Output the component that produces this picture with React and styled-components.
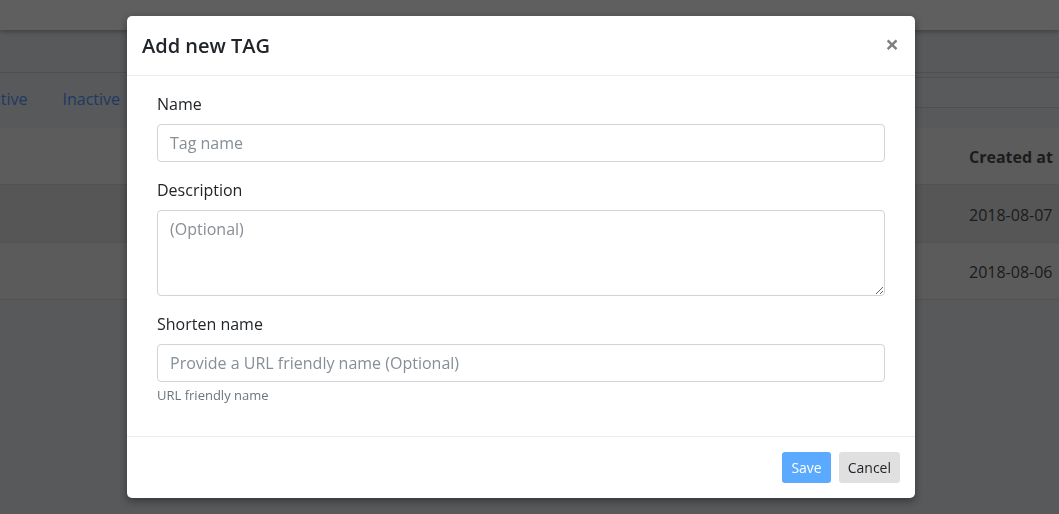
import React from 'react';
import styled, { createGlobalStyle } from 'styled-components';

const GlobalStyle = createGlobalStyle`
  html, body {
    margin: 0;
    padding: 0;
    height: 100%;
    overflow: hidden;
    font-family: "Open Sans", "Noto Sans", sans-serif;
  }
  * {
    box-sizing: border-box;
  }
`;

// 背景页面
const Page = styled.div`
  position: relative;
  isolation: isolate;
  width: 100%;
  height: 100vh;
  background: #b0b2b6;
  overflow: hidden;
`;

const TopBar = styled.div`
  height: 30px;
  background: #bebebe;
  box-shadow: 0 2px 4px rgba(0, 0, 0, 0.25);
  position: relative;
  z-index: 1;
`;

const Toolbar = styled.div`
  height: 43px;
  border-bottom: 1px solid #9c9ea2;
`;

const TabsRow = styled.div`
  height: 55px;
  display: flex;
  align-items: flex-start;
  justify-content: space-between;
`;

const Tabs = styled.div`
  display: flex;
  margin-left: -17px;
  padding-top: 14px;
  gap: 35px;
`;

const Tab = styled.a`
  font-size: 16px;
  line-height: 24px;
  color: #3f72c4;
  text-decoration: none;
`;

const Search = styled.div`
  width: 300px;
  height: 31px;
  margin-top: 4px;
  border-top: 1px solid #9c9ea2;
  border-bottom: 1px solid #9c9ea2;
  background: #b2b4b8;
`;

const Table = styled.div`
  width: 1059px;
`;

const Row = styled.div`
  display: grid;
  grid-template-columns: 957px 102px;
  height: ${(p) => p.$h}px;
  align-items: center;
  background: ${(p) => p.$bg};
  border-bottom: 1px solid #a4a4a4;
`;

const Cell = styled.div`
  grid-column: 2;
  padding-left: 12px;
  padding-top: 2px;
  font-size: 16px;
  color: #383838;
  font-weight: ${(p) => (p.$head ? 700 : 400)};
  white-space: nowrap;
`;

// 弹窗遮罩
const Backdrop = styled.div`
  position: fixed;
  inset: 0;
  background: rgba(0, 0, 0, 0.5);
`;

const Modal = styled.div`
  position: fixed;
  top: 16px;
  left: 127px;
  width: 788px;
  background: #fff;
  border-radius: 5px;
  box-shadow: 0 3px 9px rgba(0, 0, 0, 0.4);
  display: flex;
  flex-direction: column;
`;

const ModalHeader = styled.div`
  height: 60px;
  padding: 0 15px;
  display: flex;
  align-items: center;
  justify-content: space-between;
  border-bottom: 1px solid #e9ecef;
`;

const Title = styled.h5`
  margin: 0;
  font-size: 20px;
  font-weight: 600;
  color: #212529;
  line-height: 28px;
`;

const Close = styled.button`
  border: 0;
  background: transparent;
  padding: 0;
  margin-right: 1px;
  margin-top: -3px;
  font-family: inherit;
  font-size: 24px;
  font-weight: 700;
  line-height: 1;
  color: #000;
  opacity: 0.5;
  cursor: pointer;
`;

const ModalBody = styled.div`
  padding: 16px 30px 15px;
`;

const FormGroup = styled.div`
  margin-bottom: 16px;
`;

const Label = styled.label`
  display: block;
  margin-bottom: 8px;
  font-size: 16px;
  line-height: 24px;
  color: #212529;
`;

const fieldStyles = `
  display: block;
  width: 100%;
  padding: 6px 12px;
  font-family: "Open Sans", "Noto Sans", sans-serif;
  font-size: 16px;
  line-height: 24px;
  color: #495057;
  background: #fff;
  border: 1px solid #ced4da;
  border-radius: 4px;
  outline: none;
  &::placeholder {
    color: #868e96;
    opacity: 1;
  }
`;

const Input = styled.input`
  ${fieldStyles}
  height: 38px;
`;

const TextArea = styled.textarea`
  ${fieldStyles}
  height: 86px;
  resize: vertical;
`;

const Help = styled.small`
  display: block;
  margin-top: 4px;
  font-size: 13px;
  line-height: 19px;
  color: #6c757d;
`;

const ModalFooter = styled.div`
  padding: 15px;
  display: flex;
  justify-content: flex-end;
  gap: 8px;
  border-top: 1px solid #e9ecef;
`;

const Button = styled.button`
  height: 31px;
  padding: 0 9px;
  border: 0;
  border-radius: 3px;
  font-family: inherit;
  font-size: 14px;
  background: ${(p) => (p.$primary ? '#5aabff' : '#e0e0e0')};
  color: ${(p) => (p.$primary ? '#fff' : '#212529')};
  cursor: pointer;
`;

const App = () => {
  return (
    <>
      <GlobalStyle />
      <Page>
        <TopBar />
        <Toolbar />
        <TabsRow>
          <Tabs>
            <Tab>Active</Tab>
            <Tab>Inactive</Tab>
          </Tabs>
          <Search />
        </TabsRow>
        <Table>
          <Row $h={57} $bg="#b8b8b8">
            <Cell $head>Created at</Cell>
          </Row>
          <Row $h={58} $bg="#acacac">
            <Cell>2018-08-07</Cell>
          </Row>
          <Row $h={57} $bg="#b6b6b6">
            <Cell>2018-08-06</Cell>
          </Row>
        </Table>
      </Page>
      <Backdrop />
      <Modal>
        <ModalHeader>
          <Title>Add new TAG</Title>
          <Close>×</Close>
        </ModalHeader>
        <ModalBody>
          <FormGroup>
            <Label>Name</Label>
            <Input placeholder="Tag name" />
          </FormGroup>
          <FormGroup>
            <Label>Description</Label>
            <TextArea placeholder="(Optional)" />
          </FormGroup>
          <FormGroup>
            <Label>Shorten name</Label>
            <Input placeholder="Provide a URL friendly name (Optional)" />
            <Help>URL friendly name</Help>
          </FormGroup>
        </ModalBody>
        <ModalFooter>
          <Button $primary>Save</Button>
          <Button>Cancel</Button>
        </ModalFooter>
      </Modal>
    </>
  );
};

export default App;
